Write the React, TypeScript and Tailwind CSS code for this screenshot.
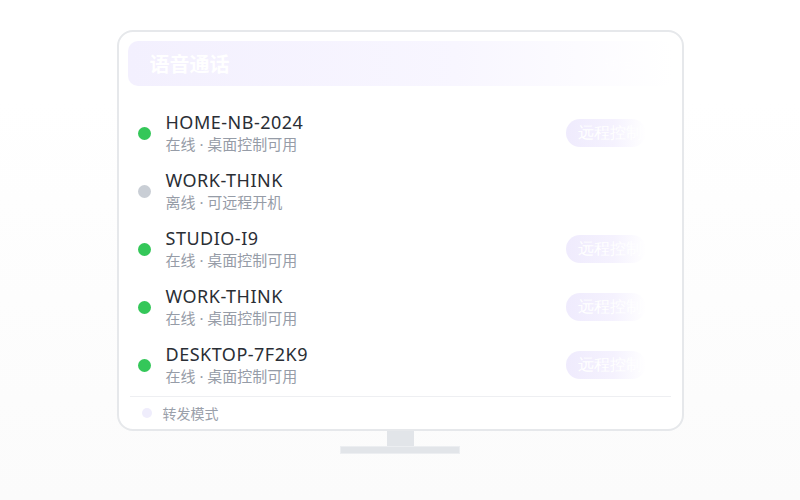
import React from "react";

type Device = { name: string; online: boolean };

const devices: Device[] = [
  { name: "HOME-NB-2024", online: true },
  { name: "WORK-THINK", online: false },
  { name: "STUDIO-I9", online: true },
  { name: "WORK-THINK", online: true },
  { name: "DESKTOP-7F2K9", online: true },
];

const latin = { fontFamily: '"Noto Sans", "Noto Sans CJK SC", sans-serif' };

function DeviceRow({ d }: { d: Device }) {
  return (
    <div className="flex h-[58px] items-center pl-[10px] pr-[6px]">
      <span
        className={`h-[13px] w-[13px] shrink-0 rounded-full ${d.online ? "bg-[#34c759]" : "bg-[#c9ced5]"}`}
      />
      <div className="ml-[15px] flex flex-1 flex-col">
        <span className="text-[18px] leading-[22px] tracking-[0.5px] text-[#2a2e35]" style={latin}>
          {d.name}
        </span>
        <span className="text-[15px] leading-[22px] text-[#969ca7]" style={latin}>
          {d.online ? "在线 · 桌面控制可用" : "离线 · 可远程开机"}
        </span>
      </div>
      {d.online && (
        <div className="mr-[21px] flex h-[28px] w-[80px] items-center rounded-full bg-gradient-to-r from-[#efebfd] via-[#f5f2fe] via-60% to-white pl-[12px]">
          <span className="font-serif text-[16px] text-white">远程控制</span>
        </div>
      )}
    </div>
  );
}

export default function App() {
  return (
    <div
      className="flex h-[500px] w-[800px] flex-col items-center bg-gradient-to-b from-white from-20% to-[#fbfbfb] pt-[30px]"
      style={{ fontFamily: '"Noto Sans CJK SC", "Noto Sans", sans-serif' }}
    >
      <div className="flex h-[401px] w-[567px] flex-col rounded-[16px] border-2 border-[#e6e8eb] bg-white px-[9px] pt-[9px]">
        <div className="flex h-[45px] items-center justify-between rounded-[10px] bg-gradient-to-r from-[#f3f0fe] via-[#f8f6ff] via-60% to-white px-[22px]">
          <span className="text-[20px] font-bold text-white">语音通话</span>
          <span className="mr-[4px] text-[14px] text-white opacity-80">通话中</span>
        </div>
        <div className="mt-[18px] flex flex-col">
          {devices.map((d, i) => (
            <DeviceRow key={i} d={d} />
          ))}
        </div>
        <div className="mx-[2px] mt-[2px] border-t border-[#eeeff2]" />
        <div className="flex h-[32px] items-center pl-[14px]">
          <span className="h-[10px] w-[10px] rounded-full bg-[#efedfc]" />
          <span className="ml-[11px] text-[14px] text-[#9aa0aa]">转发模式</span>
        </div>
      </div>
      <div className="h-[15px] w-[27px] bg-[#e2e5e9]" />
      <div className="h-[8px] w-[120px] border border-[#eceef1] bg-[#e2e5e9]" />
    </div>
  );
}
